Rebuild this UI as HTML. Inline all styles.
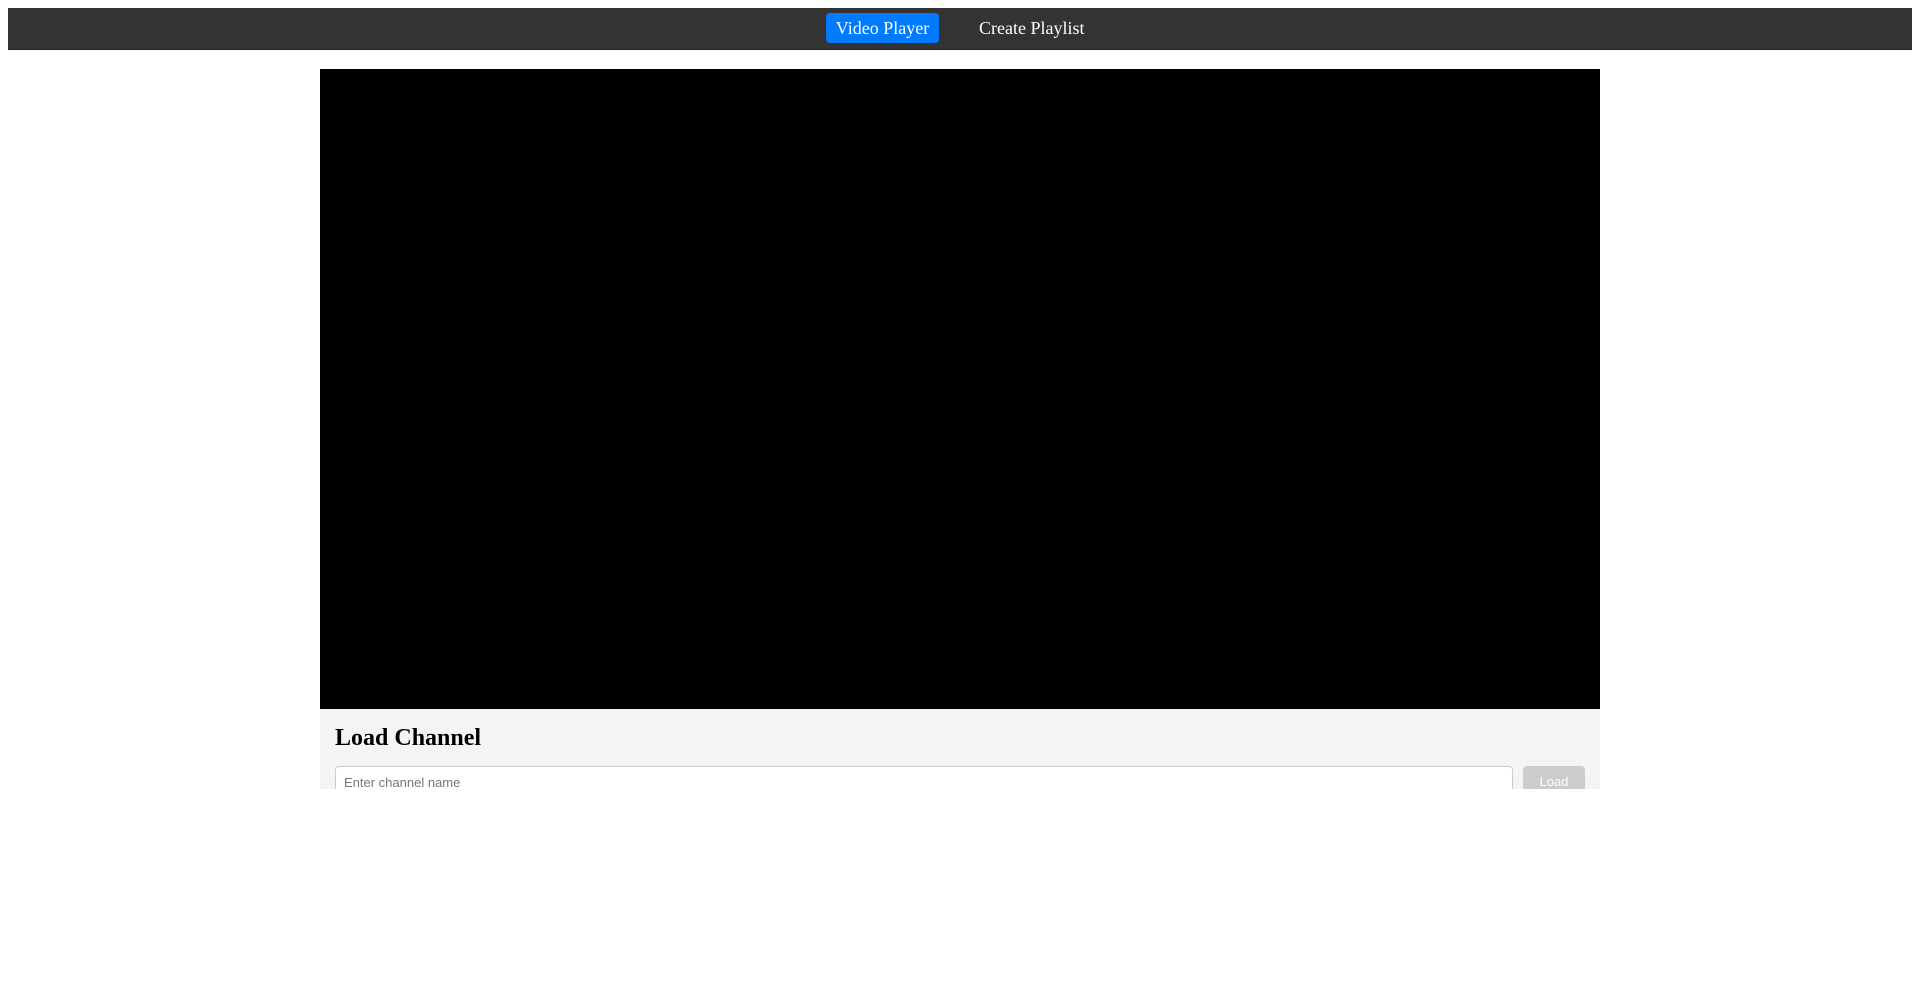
<!DOCTYPE html>
<html><head><style>
html,body{margin:0;padding:0;background:#fff;width:1920px;height:993px;overflow:hidden}
.nav{position:absolute;left:8px;top:8px;width:1904px;height:41px;background:#333;border-bottom:1px solid #222}
.btn1{position:absolute;left:818px;top:5px;width:113px;height:30px;background:#007bff;border-radius:4px;color:#fff;font:18px "Liberation Serif",serif;line-height:31px;text-align:center}
.btn2{position:absolute;left:971px;top:5px;color:#fff;font:18px "Liberation Serif",serif;line-height:31px}
.video{position:absolute;left:320px;top:69px;width:1280px;height:640px;background:#000}
.panel{position:absolute;left:320px;top:709px;width:1280px;height:80px;background:#f4f4f4;overflow:hidden}
h2{position:absolute;left:15px;top:16px;margin:0;font:bold 24px "Liberation Serif",serif}
.inp{position:absolute;left:15px;top:57px;width:1178px;height:30px;background:#fff;border:1px solid #ccc;border-radius:4px;box-sizing:border-box;font:13px "Liberation Sans",sans-serif;color:#777;padding:8px 8px}
.lb{position:absolute;left:1203px;top:57px;width:62px;height:30px;background:#ccc;border-radius:4px;color:#fff;font:13px "Liberation Sans",sans-serif;text-align:center;line-height:32px}
</style></head><body>
<div class="nav"><div class="btn1">Video Player</div><div class="btn2">Create Playlist</div></div>
<div class="video"></div>
<div class="panel"><h2>Load Channel</h2><div class="inp">Enter channel name</div><div class="lb">Load</div></div>
</body></html>
